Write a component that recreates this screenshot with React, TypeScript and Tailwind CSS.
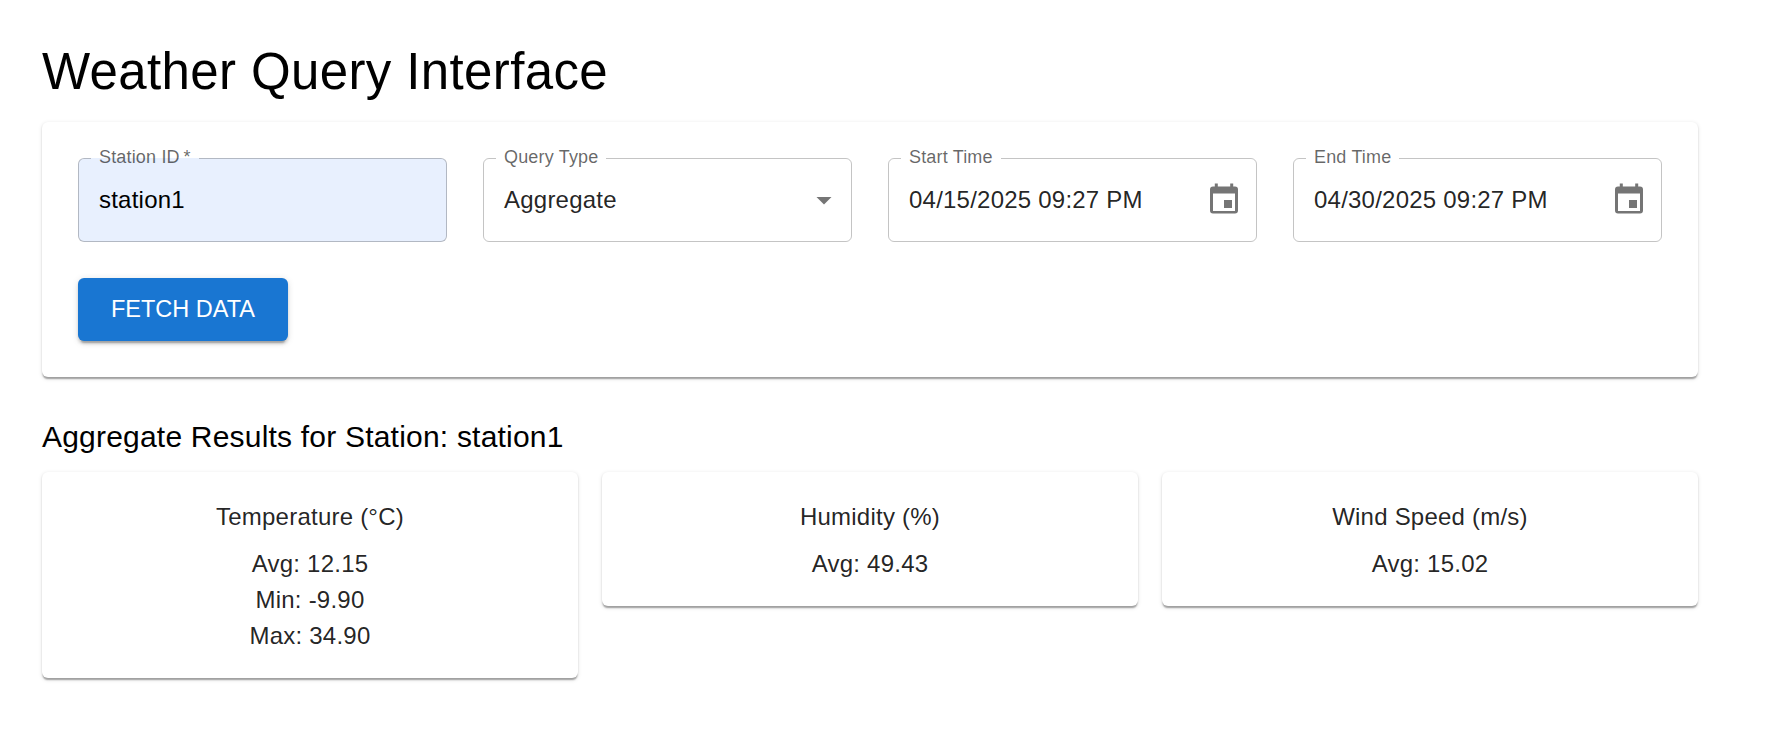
import type { ReactNode } from "react";

const paper =
  "rounded-[6px] bg-white shadow-[0_3px_1.5px_-1.5px_rgba(0,0,0,0.2),0_1.5px_1.5px_0_rgba(0,0,0,0.14),0_1.5px_4.5px_0_rgba(0,0,0,0.12)]";

function Field({ label, filled = false, children }: { label: string; filled?: boolean; children: ReactNode }) {
  return (
    <fieldset
      className={`-mt-[13px] h-[97px] min-w-0 rounded-[6px] border border-black/23 px-3 ${filled ? "bg-[#e8f0fe] text-black" : "text-black/87"}`}
    >
      <legend className="h-[26px] px-2 text-[18px] leading-[24px] tracking-[0.00938em] text-black/60">{label}</legend>
      <div className="flex h-[58px] items-center justify-between pl-2 text-[24px] leading-[34px] tracking-[0.00938em]">
        {children}
      </div>
    </fieldset>
  );
}

function CalendarIcon() {
  return (
    <svg className="mr-[6px] mb-[3px] h-[31px] w-[28px]" viewBox="0 0 28 31" fill="#757575" aria-hidden="true">
      <path
        fillRule="evenodd"
        d="M4.800 .5h3v3h12.400v-3h3v3H25a3 3 0 0 1 3 3v21a3 3 0 0 1-3 3H3a3 3 0 0 1-3-3v-21a3 3 0 0 1 3-3h1.800zM3 10.500v17.500h22V10.500z"
      />
      <path d="M14 17h8v8h-8z" />
    </svg>
  );
}

function ResultCard({ title, rows }: { title: string; rows: string[] }) {
  return (
    <section className={`${paper} p-6 text-center text-[24px] tracking-[0.00938em] text-black/87`}>
      <h3 className="mb-[8.4px] leading-[42px]">{title}</h3>
      {rows.map((row) => (
        <p key={row} className="leading-[36px]">
          {row}
        </p>
      ))}
    </section>
  );
}

export default function App() {
  return (
    <main className="min-h-screen bg-white pt-[40px] pr-[79px] pl-[42px] font-['Liberation_Sans',Arial,sans-serif] text-black">
      <h1 className="mb-[19px] text-[51px] leading-[63px] tracking-[0.00735em]">Weather Query Interface</h1>
      <form className={`${paper} p-9`} onSubmit={(e) => e.preventDefault()}>
        <div className="grid grid-cols-4 gap-9">
          <Field label={"Station ID\u2009*"} filled>
            <span>station1</span>
          </Field>
          <Field label="Query Type">
            <span>Aggregate</span>
            <svg className="-mr-[3px] size-9" viewBox="0 0 24 24" fill="#757575" aria-hidden="true">
              <path d="m7 10 5 5 5-5z" />
            </svg>
          </Field>
          <Field label="Start Time">
            <span>04/15/2025 09:27 PM</span>
            <CalendarIcon />
          </Field>
          <Field label="End Time">
            <span>04/30/2025 09:27 PM</span>
            <CalendarIcon />
          </Field>
        </div>
        <button className="mt-9 block w-[210px] rounded-[6px] bg-[#1976d2] py-3 text-[23.5px] leading-[39.4px] whitespace-nowrap text-white shadow-[0_4.5px_1.5px_-3px_rgba(0,0,0,0.2),0_3px_3px_0_rgba(0,0,0,0.14),0_1.5px_7.5px_0_rgba(0,0,0,0.12)]">
          FETCH DATA
        </button>
      </form>
      <h2 className="mt-9 mb-[10.5px] text-[30px] leading-[48px] tracking-[0.0068em]">
        Aggregate Results for Station: station1
      </h2>
      <div className="grid grid-cols-3 items-start gap-6">
        <ResultCard title="Temperature (°C)" rows={["Avg: 12.15", "Min: -9.90", "Max: 34.90"]} />
        <ResultCard title="Humidity (%)" rows={["Avg: 49.43"]} />
        <ResultCard title="Wind Speed (m/s)" rows={["Avg: 15.02"]} />
      </div>
    </main>
  );
}
